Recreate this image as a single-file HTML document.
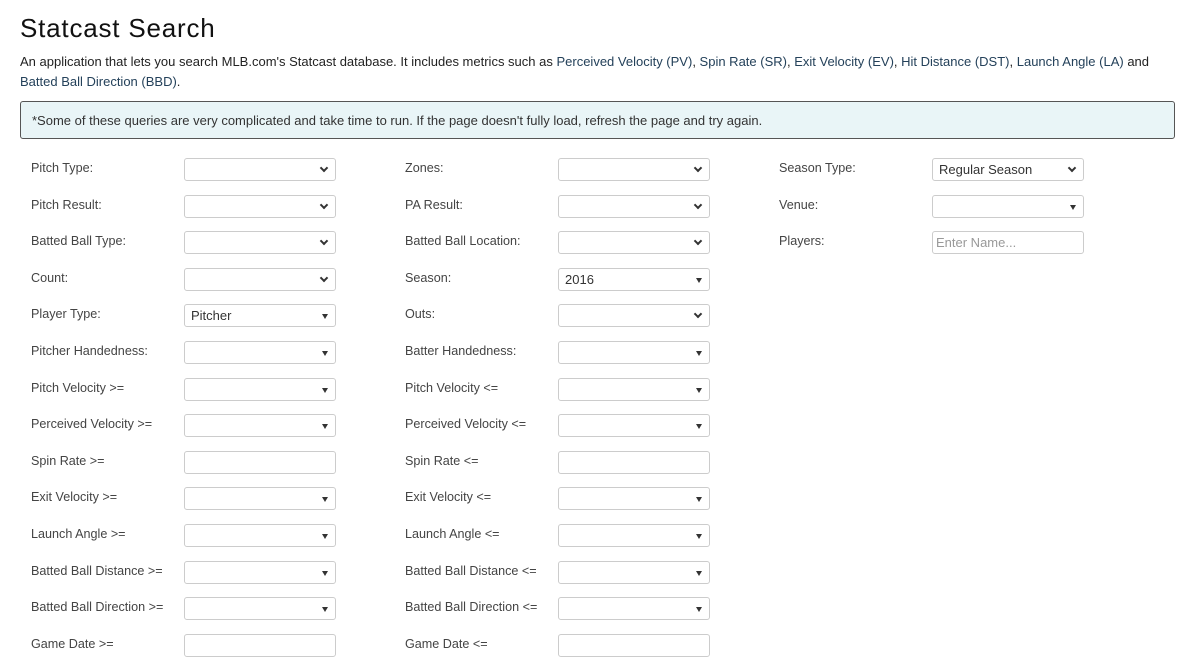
<!DOCTYPE html>
<html><head><meta charset="utf-8"><style>
body{margin:0;background:#fff;font-family:"Liberation Sans",sans-serif;color:#222;width:1200px;height:664px;overflow:hidden;position:relative}
h1{position:absolute;left:20px;top:13px;margin:0;font-weight:normal;font-size:26px;letter-spacing:0.8px;color:#111}
.desc{position:absolute;left:20px;top:52px;width:1150px;font-size:13px;line-height:20px;color:#222}
.desc span{color:#24415a}
.alert{position:absolute;left:20px;top:101px;width:1155px;height:38px;background:#e9f5f7;border:1px solid #555;border-radius:3px;box-sizing:border-box;font-size:13px;line-height:37px;padding-left:11px;color:#333}
.l{position:absolute;font-size:13px;color:#444}
.b{position:absolute;width:152px;height:23px;border:1px solid #ccc;border-radius:3px;box-sizing:border-box;background:#fff;font-size:13px;color:#333;line-height:21px;padding-left:6px}
.c::after{content:"";position:absolute;right:8px;top:6px;width:4px;height:4px;border-right:2px solid #333;border-bottom:2px solid #333;transform:rotate(45deg)}
.t::after{content:"";position:absolute;right:7px;top:9px;border-left:3px solid transparent;border-right:3px solid transparent;border-top:5px solid #333}
.ph{color:#999;padding-left:2px}
</style></head><body>
<h1>Statcast Search</h1>
<div class="desc">An application that lets you search MLB.com's Statcast database. It includes metrics such as <span>Perceived Velocity (PV)</span>, <span>Spin Rate (SR)</span>, <span>Exit Velocity (EV)</span>, <span>Hit Distance (DST)</span>, <span>Launch Angle (LA)</span> and <span>Batted Ball Direction (BBD)</span>.</div>
<div class="alert">*Some of these queries are very complicated and take time to run. If the page doesn't fully load, refresh the page and try again.</div>
<div id="f"></div>
<script>
var rows=[
["Pitch Type:","c","","Zones:","c","","Season Type:","c","Regular Season"],
["Pitch Result:","c","","PA Result:","c","","Venue:","t",""],
["Batted Ball Type:","c","","Batted Ball Location:","c","","Players:","i","Enter Name..."],
["Count:","c","","Season:","t","2016"],
["Player Type:","t","Pitcher","Outs:","c",""],
["Pitcher Handedness:","t","","Batter Handedness:","t",""],
["Pitch Velocity >=","t","","Pitch Velocity <=","t",""],
["Perceived Velocity >=","t","","Perceived Velocity <=","t",""],
["Spin Rate >=","n","","Spin Rate <=","n",""],
["Exit Velocity >=","t","","Exit Velocity <=","t",""],
["Launch Angle >=","t","","Launch Angle <=","t",""],
["Batted Ball Distance >=","t","","Batted Ball Distance <=","t",""],
["Batted Ball Direction >=","t","","Batted Ball Direction <=","t",""],
["Game Date >=","n","","Game Date <=","n",""]];
var lx=[31,405,779],bx=[184,558,932],h="";
rows.forEach(function(r,i){var y=158+i*36.6;
for(var c=0;c<r.length/3;c++){
h+='<div class="l" style="left:'+lx[c]+'px;top:'+(y+3)+'px;font-size:12.6px">'+r[c*3].replace(/</g,"&lt;").replace(/>/g,"&gt;")+'</div>';
var k=r[c*3+1];var cls=k=="c"?"b c":k=="t"?"b t":"b";
var txt=r[c*3+2];if(k=="i")txt='<span class="ph">'+txt+'</span>';
h+='<div class="'+cls+'" style="left:'+bx[c]+'px;top:'+y+'px'+(k=="i"?';padding-left:1px':'')+'">'+txt+'</div>';}});
document.getElementById("f").innerHTML=h;
</script>
</body></html>
